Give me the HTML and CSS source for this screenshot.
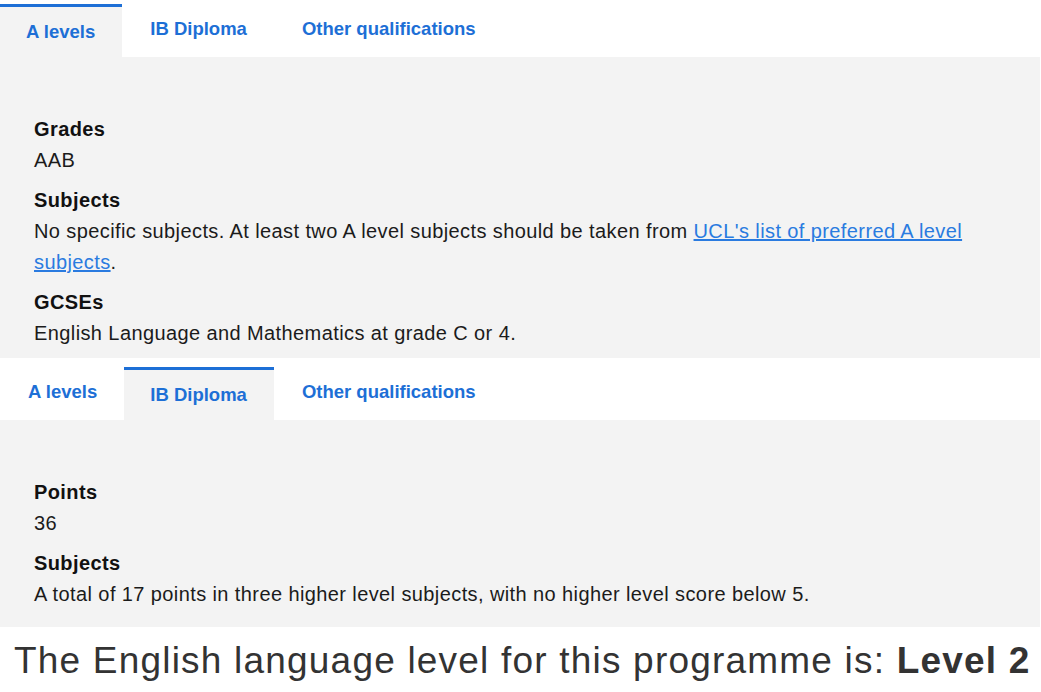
FILE: index.html
```html
<!DOCTYPE html>
<html lang="en">
<head>
<meta charset="utf-8">
<title>Entry requirements</title>
<link rel="stylesheet" href="styles.css">
</head>
<body>
<div class="page">
  <section class="tabset tabset--first">
    <ul class="tabs">
      <li class="tab tab--active">A levels</li>
      <li class="tab">IB Diploma</li>
      <li class="tab">Other qualifications</li>
    </ul>
    <div class="panel panel--first">
      <dl class="reqs">
        <dt>Grades</dt>
        <dd>AAB</dd>
        <dt>Subjects</dt>
        <dd>No specific subjects. At least two A level subjects should be taken from <a href="#">UCL's list of preferred A level subjects</a>.</dd>
        <dt>GCSEs</dt>
        <dd>English Language and Mathematics at grade C or 4.</dd>
      </dl>
    </div>
  </section>
  <section class="tabset">
    <ul class="tabs">
      <li class="tab">A levels</li>
      <li class="tab tab--active">IB Diploma</li>
      <li class="tab">Other qualifications</li>
    </ul>
    <div class="panel panel--second">
      <dl class="reqs">
        <dt>Points</dt>
        <dd>36</dd>
        <dt>Subjects</dt>
        <dd>A total of 17 points in three higher level subjects, with no higher level score below 5.</dd>
      </dl>
    </div>
  </section>
  <p class="english">The English language level for this programme is: <strong>Level 2</strong></p>
</div>
</body>
</html>
```

FILE: styles.css
```css
html, body {
  margin: 0;
  padding: 0;
  background: #ffffff;
}
body {
  font-family: "Liberation Sans", Arial, sans-serif;
  color: #1b1b1b;
  overflow: hidden;
}
.page {
  width: 1040px;
}
.tabset--first {
  margin-top: -5px;
}
.tabs {
  list-style: none;
  margin: 0;
  padding: 9px 0 0 0;
  height: 62px;
  box-sizing: border-box;
  display: flex;
  align-items: stretch;
  background: #ffffff;
}
.tab {
  padding: 14px 27px 0 28px;
  font-size: 18.5px;
  line-height: 22px;
  font-weight: bold;
  color: #1d6fd6;
  white-space: nowrap;
}
.tab--active {
  background: #f3f3f3;
  border-top: 3px solid #1d6fd6;
  padding-left: 26px;
  padding-right: 27px;
}
.panel {
  background: #f3f3f3;
  padding: 57px 20px 9px 34px;
}
.panel--second {
  padding-bottom: 17px;
}
.reqs {
  margin: 0;
  font-size: 20px;
  line-height: 31px;
  letter-spacing: 0.4px;
}
.reqs dt {
  font-weight: bold;
  color: #111111;
}
.reqs dd {
  margin: 0 0 9px 0;
}
.reqs dd:last-child {
  margin-bottom: 0;
}
.reqs a {
  color: #2a7be0;
  text-decoration: underline;
}
.english {
  margin: 13px 0 0 0;
  padding-left: 14px;
  font-size: 37px;
  letter-spacing: 1.2px;
  color: #333333;
  white-space: nowrap;
}
.english strong {
  font-weight: bold;
}
```
